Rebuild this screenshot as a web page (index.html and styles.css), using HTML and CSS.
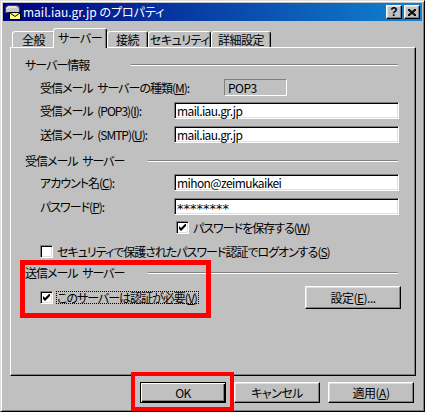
FILE: index.html
```html
<!DOCTYPE html>
<html lang="ja">
<head>
<meta charset="utf-8">
<title>mail.iau.gr.jp のプロパティ</title>
<link rel="stylesheet" href="styles.css">
</head>
<body>
<div class="window">
  <div class="titlebar">
    <svg class="title-icon" viewBox="0 0 16 16" aria-hidden="true">
      <path d="M0.5 8.5 V5 Q0.5 1.5 4 1.5 H11 Q14.5 1.5 14.5 5 V8.5 Z" fill="#c8c8c8" stroke="#404040"/>
      <path d="M2 5 Q2 3 4 3 H11" fill="none" stroke="#ffffff"/>
      <rect x="4.5" y="8.5" width="11" height="7" fill="#ffff80" stroke="#000"/>
      <path d="M4.5 8.5 L10 12.5 L15.5 8.5" fill="none" stroke="#000"/>
    </svg>
    <span class="title-text">mail.iau.gr.jp のプロパティ</span>
    <div class="title-buttons">
      <div class="tbtn help">?</div>
      <div class="tbtn close">
        <svg viewBox="0 0 8 7" width="8" height="7" aria-hidden="true">
          <path d="M0 0 L8 7 M1 0 L8 6 M0 1 L7 7 M8 0 L0 7 M7 0 L0 6 M8 1 L1 7" stroke="#000" stroke-width="1" fill="none"/>
        </svg>
      </div>
    </div>
  </div>

  <div class="tabs">
    <div class="tab t-general">全般</div>
    <div class="tab t-server active">サーバー</div>
    <div class="tab t-conn">接続</div>
    <div class="tab t-sec">セキュリティ</div>
    <div class="tab t-adv">詳細設定</div>
  </div>

  <div class="panel">
    <div class="group-head">
      <span class="gh-label gh-short">サーバー情報</span><span class="etch"></span>
    </div>
    <div class="row field-row sp-8">
      <span class="lbl lbl-wide">受信メール サーバーの種類(<u>M</u>):</span>
      <span class="static-box">POP3</span>
    </div>
    <div class="row field-row sp-6">
      <span class="lbl">受信メール (POP3)(<u>I</u>):</span>
      <span class="input">mail.iau.gr.jp</span>
    </div>
    <div class="row field-row sp-7">
      <span class="lbl">送信メール (SMTP)(<u>U</u>):</span>
      <span class="input">mail.iau.gr.jp</span>
    </div>

    <div class="group-head sp-12">
      <span class="gh-label">受信メール サーバー</span><span class="etch"></span>
    </div>
    <div class="row field-row sp-7">
      <span class="lbl">アカウント名(<u>C</u>):</span>
      <span class="input">mihon@zeimukaikei</span>
    </div>
    <div class="row field-row sp-7">
      <span class="lbl">パスワード(<u>P</u>):</span>
      <span class="input pw">********</span>
    </div>
    <div class="row check-row sp-6 indent-save">
      <span class="cb checked"><svg viewBox="0 0 7 7" width="7" height="7" aria-hidden="true"><path d="M0 2 L2 4 L7 -1 L7 2 L2 7 L0 5 Z" fill="#000"/></svg></span>
      <span class="cb-label">パスワードを保存する(<u>W</u>)</span>
    </div>
    <div class="row check-row sp-11">
      <span class="cb"></span>
      <span class="cb-label">セキュリティで保護されたパスワード認証でログオンする(<u>S</u>)</span>
    </div>

    <div class="group-head sp-9">
      <span class="gh-label">送信メール サーバー</span><span class="etch"></span>
    </div>
    <div class="row auth-row sp-7">
      <span class="cb checked"><svg viewBox="0 0 7 7" width="7" height="7" aria-hidden="true"><path d="M0 2 L2 4 L7 -1 L7 2 L2 7 L0 5 Z" fill="#000"/></svg></span>
      <span class="cb-label focus">このサーバーは認証が必要(<u>V</u>)</span>
      <div class="btn btn-settings">設定(<u>E</u>)...</div>
    </div>
  </div>

  <div class="button-row">
    <div class="btn default">OK</div>
    <div class="btn">キャンセル</div>
    <div class="btn">適用(<u>A</u>)</div>
  </div>
</div>

<div class="mark mark-auth"></div>
<div class="mark mark-ok"></div>
</body>
</html>
```

FILE: styles.css
```css
* {
  box-sizing: border-box;
}

html,
body {
  margin: 0;
  padding: 0;
}

body {
  position: relative;
  width: 425px;
  height: 412px;
  overflow: hidden;
  background: #c0c0c0;
  color: #000;
  font-family: "Noto Sans CJK JP", "Noto Sans", sans-serif;
  font-size: 12px;
  line-height: 12px;
  font-feature-settings: "palt";
}

u {
  text-decoration-thickness: 1px;
  text-underline-offset: 1px;
}

.window {
  width: 425px;
  height: 412px;
  display: flex;
  flex-direction: column;
  padding: 2px;
  background: #c0c0c0;
  border: 1px solid;
  border-color: #dfdfdf #000 #000 #dfdfdf;
  box-shadow: inset 1px 1px #fff, inset -1px -1px #808080;
}

/* title bar */
.titlebar {
  height: 18px;
  flex: none;
  display: flex;
  align-items: center;
  padding: 0 2px;
  background: linear-gradient(to right, #000080, #1084d0);
  color: #fff;
}

.title-icon {
  width: 16px;
  height: 16px;
  flex: none;
}

.title-text {
  margin-left: 2px;
  white-space: nowrap;
}

.title-buttons {
  margin-left: auto;
  display: flex;
  gap: 2px;
}

.tbtn {
  width: 16px;
  height: 14px;
  display: flex;
  align-items: center;
  justify-content: center;
  background: #c0c0c0;
  border: 1px solid;
  border-color: #fff #000 #000 #fff;
  box-shadow: inset -1px -1px #808080, inset 1px 1px #dfdfdf;
  color: #000;
}

.help {
  font-family: "Liberation Sans", sans-serif;
  font-weight: bold;
  font-size: 12px;
  line-height: 12px;
}

/* tabs */
.tabs {
  position: relative;
  z-index: 1;
  height: 19px;
  flex: none;
  display: flex;
  align-items: flex-end;
  margin: 7px 0 0 9px;
  letter-spacing: -0.5px;
}

.tab {
  height: 16px;
  display: flex;
  align-items: center;
  justify-content: center;
  padding-top: 1px;
  background: #c0c0c0;
  border: 1px solid;
  border-bottom: none;
  border-color: #fff #000 transparent #fff;
  border-radius: 3px 3px 0 0;
  box-shadow: inset -1px 0 #808080;
  white-space: nowrap;
}

.t-general { width: 43px; }
.t-server { width: 54px; }
.t-conn { width: 41px; }
.t-sec { width: 63px; }
.t-adv { width: 60px; }

.tab.active {
  position: relative;
  height: 20px;
  margin: 0 0 -1px -2px;
  align-items: flex-start;
  padding-top: 3px;
}

/* panel */
.panel {
  width: 406px;
  height: 329px;
  flex: none;
  margin-left: 7px;
  padding: 11px 16px 0 14px;
  display: flex;
  flex-direction: column;
  border: 1px solid;
  border-color: #fff #000 #000 #fff;
  box-shadow: inset -1px -1px #808080;
  letter-spacing: -1px;
  word-spacing: 3px;
}

.group-head {
  height: 12px;
  display: flex;
  align-items: center;
}

.gh-label {
  width: 123px;
  flex: none;
  white-space: nowrap;
}

.gh-label.gh-short {
  width: 106px;
}

.etch {
  flex: 1;
  height: 2px;
  margin-right: 1px;
  border-top: 1px solid #808080;
  border-bottom: 1px solid #fff;
}

.row {
  display: flex;
  align-items: center;
  margin-left: 15px;
  white-space: nowrap;
}

.sp-6 { margin-top: 6px; }
.sp-7 { margin-top: 7px; }
.sp-8 { margin-top: 8px; }
.sp-9 { margin-top: 9px; }
.sp-11 { margin-top: 11px; }
.sp-12 { margin-top: 12px; }

.field-row {
  height: 17px;
}

.lbl {
  width: 134px;
  flex: none;
}

.lbl.lbl-wide {
  width: 184px;
}

.input {
  width: 225px;
  height: 17px;
  flex: none;
  display: flex;
  align-items: center;
  padding: 0 2px;
  background: #fff;
  border: 1px solid;
  border-color: #808080 #fff #fff #808080;
  box-shadow: inset 1px 1px #000, inset -1px -1px #dfdfdf;
  letter-spacing: -0.6px;
}

.input.pw {
  font-family: "DejaVu Sans", sans-serif;
  font-size: 13px;
  letter-spacing: 0;
  padding-top: 5px;
}

.static-box {
  width: 63px;
  height: 17px;
  flex: none;
  display: flex;
  align-items: center;
  padding-left: 3px;
  border: 1px solid;
  border-color: #808080 #fff #fff #808080;
  letter-spacing: -0.5px;
}

.check-row {
  height: 13px;
}

.indent-save {
  margin-left: 151px;
}

.cb {
  width: 13px;
  height: 13px;
  flex: none;
  display: flex;
  align-items: center;
  justify-content: center;
  background: #fff;
  border: 1px solid;
  border-color: #808080 #fff #fff #808080;
  box-shadow: inset 1px 1px #000, inset -1px -1px #dfdfdf;
}

.cb-label {
  margin-left: 3px;
  height: 13px;
  line-height: 11px;
  padding-right: 1px;
  border: 1px dotted transparent;
}

.cb-label.focus {
  border-color: #000;
}

.auth-row {
  height: 23px;
}

.btn {
  width: 86px;
  height: 21px;
  flex: none;
  display: flex;
  align-items: center;
  justify-content: center;
  background: #c0c0c0;
  border: 1px solid;
  border-color: #fff #000 #000 #fff;
  box-shadow: inset -1px -1px #808080, inset 1px 1px #dfdfdf;
  white-space: nowrap;
  letter-spacing: -0.5px;
}

.btn.btn-settings {
  width: 96px;
  height: 23px;
  margin-left: auto;
  margin-right: -2px;
}

.btn.default {
  border-color: #000;
  box-shadow: inset 1px 1px #fff, inset -1px -1px #000, inset -2px -2px #808080;
}

.button-row {
  display: flex;
  justify-content: flex-end;
  gap: 8px;
  margin-top: 6px;
  padding-right: 8px;
}

/* annotation overlays */
.mark {
  position: absolute;
  border: 5px solid #f00;
  pointer-events: none;
}

.mark-auth {
  left: 20px;
  top: 260px;
  width: 191px;
  height: 58px;
}

.mark-ok {
  left: 131px;
  top: 372px;
  width: 103px;
  height: 39px;
  border-width: 4px;
}
```
